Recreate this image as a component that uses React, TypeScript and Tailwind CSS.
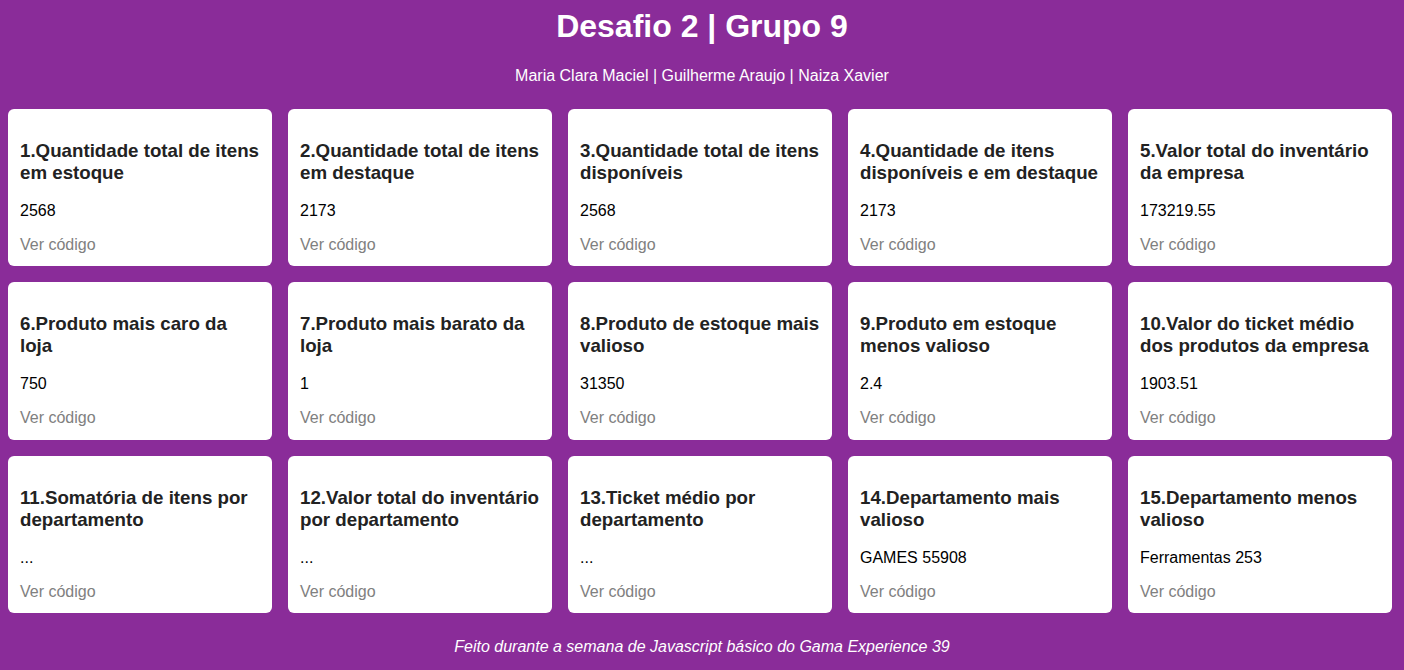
import React from "react";

const cards: { t: string; v: string }[] = [
  { t: "1.Quantidade total de itens em estoque", v: "2568" },
  { t: "2.Quantidade total de itens em destaque", v: "2173" },
  { t: "3.Quantidade total de itens disponíveis", v: "2568" },
  { t: "4.Quantidade de itens disponíveis e em destaque", v: "2173" },
  { t: "5.Valor total do inventário da empresa", v: "173219.55" },
  { t: "6.Produto mais caro da loja", v: "750" },
  { t: "7.Produto mais barato da loja", v: "1" },
  { t: "8.Produto de estoque mais valioso", v: "31350" },
  { t: "9.Produto em estoque menos valioso", v: "2.4" },
  { t: "10.Valor do ticket médio dos produtos da empresa", v: "1903.51" },
  { t: "11.Somatória de itens por departamento", v: "..." },
  { t: "12.Valor total do inventário por departamento", v: "..." },
  { t: "13.Ticket médio por departamento", v: "..." },
  { t: "14.Departamento mais valioso", v: "GAMES 55908" },
  { t: "15.Departamento menos valioso", v: "Ferramentas 253" },
];

export default function App() {
  return (
    <div
      className="min-h-screen w-full bg-[#8a2c99] text-white flex flex-col"
      style={{ fontFamily: '"Liberation Sans", Arial, sans-serif' }}
    >
      <h1 className="text-center font-bold text-[32px] leading-[37px] mt-[8px]">
        Desafio 2 | Grupo 9
      </h1>
      <p className="text-center text-[16px] leading-[18px] mt-[22px]">
        Maria Clara Maciel | Guilherme Araujo | Naiza Xavier
      </p>
      <div className="grid grid-cols-[repeat(5,264px)] gap-4 pl-2 mt-[24px]">
        {cards.map((c) => (
          <div key={c.t} className="bg-white rounded-[6px] h-[157.4px] px-3 pt-[31px] flex flex-col">
            <h3 className="text-[18.72px] leading-[22px] font-bold text-[#222222]">{c.t}</h3>
            <p className="text-[16px] leading-[18px] text-black mt-[18px]">{c.v}</p>
            <a className="text-[16px] leading-[18px] text-[#808080] mt-[16px]">Ver código</a>
          </div>
        ))}
      </div>
      <p className="text-center italic text-[16px] leading-[18px] mt-[25px]">
        Feito durante a semana de Javascript básico do Gama Experience 39
      </p>
    </div>
  );
}
